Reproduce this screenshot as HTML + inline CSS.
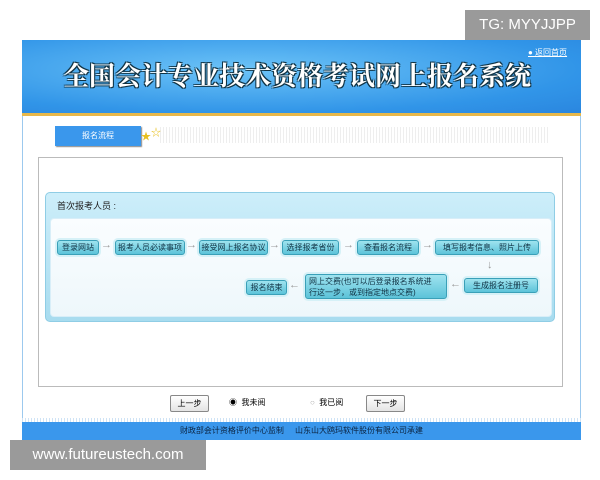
<html><head><style>
body{margin:0;width:600px;height:480px;background:#fff;position:relative;overflow:hidden;font-family:"Liberation Sans","Noto Sans CJK SC",sans-serif;}
.a{position:absolute}
.b{position:absolute;background:linear-gradient(#9fe3ef,#5cc3d9);border:1px solid #3aa0b8;border-radius:3px;box-shadow:0 0 0 2px #d6f1f7;font-size:8px;color:#134;text-align:center;line-height:13px;white-space:nowrap}
.ar{position:absolute;font-size:11px;color:#999;font-weight:bold}
.btn{position:absolute;border:1px solid #888;background:linear-gradient(#fff,#e4e4e4);font-size:8px;text-align:center;line-height:15px;border-radius:2px}
</style></head><body>
<div class="a" style="left:465px;top:10px;width:125px;height:30px;background:#9a9a9a;color:#fff;font-size:15px;line-height:30px;text-align:center">TG: MYYJJPP</div>
<div class="a" style="left:22px;top:40px;width:559px;height:383px;border:1px solid #9cc9ee;box-sizing:border-box"></div>
<div class="a" style="left:22px;top:40px;width:559px;height:73px;background:radial-gradient(ellipse at 40% 40%,#6cc3f7,#3195e8 70%,#2a86df)"></div>
<div class="a" style="left:63px;top:56px;font-size:26px;color:#fff;font-family:'Noto Serif CJK SC',serif;font-weight:bold;text-shadow:1px 1px 0 #134,-1px -1px 0 #134,1px -1px 0 #134,-1px 1px 0 #134">全国会计专业技术资格考试网上报名系统</div>
<div class="a" style="left:528px;top:47px;font-size:8px;color:#fff;text-decoration:underline">● 返回首页</div>
<div class="a" style="left:22px;top:113px;width:559px;height:3px;background:#e8b84a"></div>
<div class="a" style="left:160px;top:127px;width:390px;height:16px;background:repeating-linear-gradient(90deg,#eee 0 1px,#fff 1px 3px)"></div>
<div class="a" style="left:55px;top:126px;width:86px;height:20px;background:#3a97ec;color:#fff;font-size:8px;line-height:20px;text-align:center;box-shadow:1px 1px 1px #888">报名流程</div>
<div class="a" style="left:141px;top:128px;font-size:10px;color:#e8c020">★<span style="position:relative;top:-4px">☆</span></div>
<div class="a" style="left:38px;top:157px;width:525px;height:230px;border:1px solid #bbb;box-sizing:border-box"></div>
<div class="a" style="left:45px;top:192px;width:510px;height:130px;background:linear-gradient(#cdeefa,#a8dcef);border:1px solid #8fcde5;border-radius:5px;box-sizing:border-box"></div>
<div class="a" style="left:57px;top:199px;font-size:9px;color:#222">首次报考人员 :</div>
<div class="a" style="left:50px;top:218px;width:500px;height:97px;background:linear-gradient(#fafdff,#eef7fb);border-radius:4px;border:1px solid #d8eef8"></div>
<div class="b" style="left:57px;top:240px;width:40px">登录网站</div>
<div class="ar" style="left:101px;top:239px">→</div>
<div class="b" style="left:115px;top:240px;width:68px">报考人员必读事项</div>
<div class="ar" style="left:186px;top:239px">→</div>
<div class="b" style="left:199px;top:240px;width:67px">接受网上报名协议</div>
<div class="ar" style="left:269px;top:239px">→</div>
<div class="b" style="left:282px;top:240px;width:55px">选择报考省份</div>
<div class="ar" style="left:343px;top:239px">→</div>
<div class="b" style="left:357px;top:240px;width:60px">查看报名流程</div>
<div class="ar" style="left:422px;top:239px">→</div>
<div class="b" style="left:435px;top:240px;width:102px">填写报考信息、照片上传</div>
<div class="ar" style="left:487px;top:259px">↓</div>
<div class="b" style="left:464px;top:278px;width:72px">生成报名注册号</div>
<div class="ar" style="left:450px;top:278px">←</div>
<div class="b" style="left:305px;top:274px;width:142px;height:25px;line-height:11px;text-align:left;padding-left:3px;box-sizing:border-box;padding-top:1px">网上交费(也可以后登录报名系统进<br>行这一步，或到指定地点交费)</div>
<div class="ar" style="left:289px;top:279px">←</div>
<div class="b" style="left:246px;top:280px;width:39px">报名结束</div>
<div class="btn" style="left:170px;top:395px;width:37px">上一步</div>
<div class="a" style="left:229px;top:397px;font-size:8px">◉ &nbsp;我未阅</div>
<div class="a" style="left:310px;top:397px;font-size:8px"><span style="color:#aaa">○</span> &nbsp;我已阅</div>
<div class="btn" style="left:366px;top:395px;width:37px">下一步</div>
<div class="a" style="left:22px;top:418px;width:559px;height:4px;background:repeating-linear-gradient(90deg,#cfe3f5 0 1px,#fff 1px 3px)"></div>
<div class="a" style="left:22px;top:422px;width:559px;height:18px;background:#3a97ec;color:#0b2340;font-size:8px;line-height:18px;text-align:center">财政部会计资格评价中心监制 &nbsp; &nbsp; 山东山大鸥玛软件股份有限公司承建</div>
<div class="a" style="left:10px;top:440px;width:196px;height:30px;background:#9a9a9a;color:#fff;font-size:15px;line-height:30px;text-align:center">www.futureustech.com</div>
</body></html>
